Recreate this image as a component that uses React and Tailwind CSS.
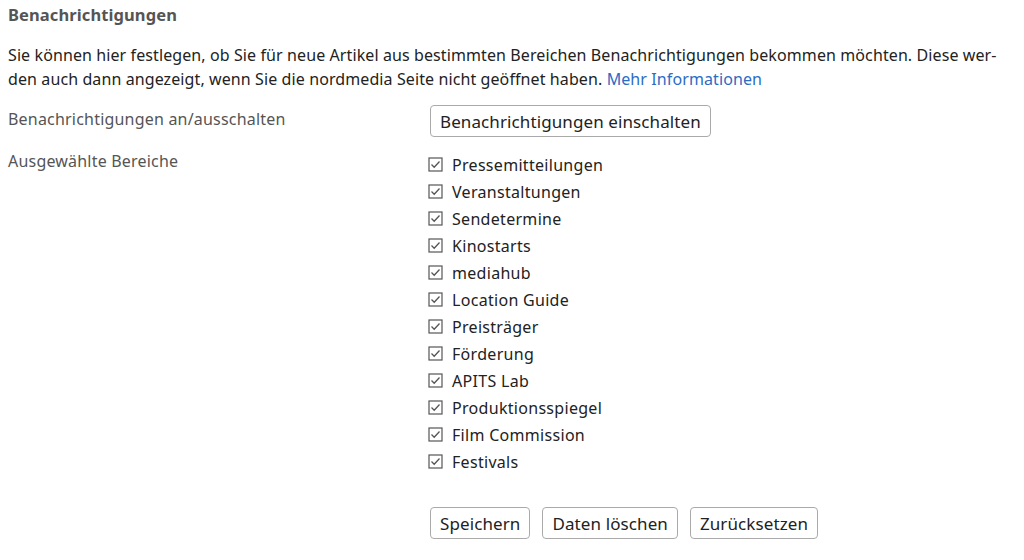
const AREAS = [
  "Pressemitteilungen",
  "Veranstaltungen",
  "Sendetermine",
  "Kinostarts",
  "mediahub",
  "Location Guide",
  "Preisträger",
  "Förderung",
  "APITS Lab",
  "Produktionsspiegel",
  "Film Commission",
  "Festivals",
];

function CheckBox() {
  return (
    <svg width="15" height="15" viewBox="0 0 15 15" className="shrink-0">
      <rect x="1" y="1" width="13" height="13" fill="white" stroke="#555" strokeWidth="1.2" />
      <path d="M3.5 7.5 L6.2 10.2 L11.5 4.5" fill="none" stroke="#555" strokeWidth="1.3" />
    </svg>
  );
}

function Btn({ children }) {
  return (
    <button className="border border-[#aaa] rounded-[4px] bg-white px-[9px] h-[32px] text-[17px] tracking-[0.1px] text-[#222] leading-none">
      {children}
    </button>
  );
}

export default function App() {
  return (
    <div className="bg-white w-[1024px] h-[560px] px-[8px] pt-[4px] text-[#222]" style={{ fontFamily: '"Noto Sans", sans-serif' }}>
      <h3 className="font-bold text-[16.5px] tracking-[0.1px] text-[#555] leading-[22px]">Benachrichtigungen</h3>
      <p className="mt-[17px] text-[16px] tracking-[0.1px] leading-[24px] text-[#222]">
        Sie können hier festlegen, ob Sie für neue Artikel aus bestimmten Bereichen Benachrichtigungen bekommen möchten. Diese wer-
        <br />
        den auch dann angezeigt, wenn Sie die nordmedia Seite nicht geöffnet haben.{" "}
        <a className="text-[#2b6cc4]">Mehr Informationen</a>
      </p>

      <div className="grid grid-cols-[420px_1fr] mt-[14px] text-[16px] tracking-[0.2px]">
        <div className="text-[#555] pt-[2px]">Benachrichtigungen an/ausschalten</div>
        <div className="pl-[2px]">
          <Btn>Benachrichtigungen einschalten</Btn>
        </div>

        <div className="text-[#555] mt-[12px]">Ausgewählte Bereiche</div>
        <div className="mt-[14px] flex flex-col">
          {AREAS.map((a) => (
            <label key={a} className="flex items-center gap-[9px] h-[27px] text-[16px] tracking-[0.3px] text-[#222]">
              <CheckBox />
              {a}
            </label>
          ))}
        </div>

        <div />
        <div className="flex gap-[12px] mt-[32px] pl-[2px]">
          <Btn>Speichern</Btn>
          <Btn>Daten löschen</Btn>
          <Btn>Zurücksetzen</Btn>
        </div>
      </div>
    </div>
  );
}
